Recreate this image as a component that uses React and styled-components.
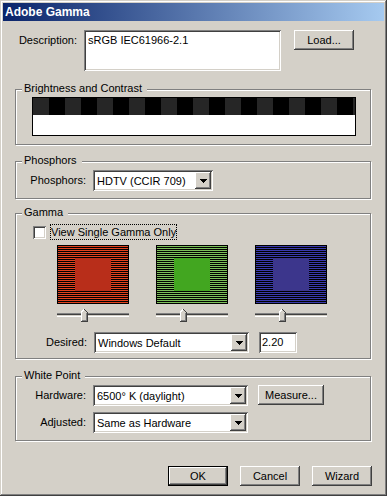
import styled, { createGlobalStyle, css } from "styled-components";

const GlobalStyle = createGlobalStyle`
  body {
    margin: 0;
    background: #d4d0c8;
    font-family: "Liberation Sans", Arial, sans-serif;
    font-size: 11px;
    color: #000;
  }
`;

const sunken = css`
  box-sizing: border-box;
  background: #fff;
  box-shadow: inset 1px 1px #808080, inset -1px -1px #fff,
    inset 2px 2px #404040, inset -2px -2px #d4d0c8;
`;

const raised = css`
  box-sizing: border-box;
  background: #d4d0c8;
  box-shadow: inset -1px -1px #404040, inset 1px 1px #fff,
    inset -2px -2px #808080, inset 2px 2px #d4d0c8;
`;

const Window = styled.div`
  width: 387px;
  height: 496px;
  box-sizing: border-box;
  padding: 3px;
  background: #d4d0c8;
  box-shadow: inset -1px -1px #404040, inset 1px 1px #d4d0c8,
    inset -2px -2px #808080, inset 2px 2px #fff;
  display: flex;
  flex-direction: column;
`;

const TitleBar = styled.div`
  height: 18px;
  display: flex;
  align-items: center;
  padding-left: 2px;
  background: linear-gradient(to right, #0a246a, #a6caf0);
  color: #fff;
  font-weight: bold;
  font-size: 12px;
`;

const Body = styled.div`
  flex: 1;
  display: flex;
  flex-direction: column;
  padding: 9px 13px 0 12px;
`;

const Row = styled.div`
  display: flex;
  align-items: flex-start;
  margin-top: ${(p) => p.$mt || 0}px;
`;

const Label = styled.span`
  width: ${(p) => p.$w}px;
  margin-right: 7px;
  text-align: right;
  line-height: ${(p) => (p.$top ? "13px" : "21px")};
  padding-top: ${(p) => (p.$top ? 4 : 0)}px;
  white-space: nowrap;
`;

const DescBox = styled.div`
  ${sunken};
  width: 197px;
  height: 41px;
  padding: 4px 4px;
  line-height: 13px;
`;

const Button = styled.button`
  ${raised};
  width: ${(p) => p.$w}px;
  height: 20px;
  margin-left: ${(p) => p.$ml || 0}px;
  padding: 0;
  border: ${(p) => (p.$default ? "1px solid #000" : "none")};
  font: inherit;
  color: #000;
`;

const Group = styled.div`
  position: relative;
  margin-top: ${(p) => p.$mt}px;
  border: 1px solid #808080;
  box-shadow: inset 1px 1px #fff, 1px 1px #fff;
  padding: ${(p) => p.$pad};
`;

const Caption = styled.span`
  position: absolute;
  top: -8px;
  left: 6px;
  padding: 0 5px 0 2px;
  background: #d4d0c8;
  line-height: 13px;
`;

const Bar = styled.div`
  width: 324px;
  margin-left: 16px;
  box-sizing: border-box;
  border: 1px solid #000;
`;

const Checker = styled.div`
  height: 17px;
  background: repeating-linear-gradient(
    to right,
    #262626 0 16px,
    #000 16px 32px
  );
`;

const WhiteStrip = styled.div`
  height: 20px;
  background: #fff;
`;

const SelectBox = styled.div`
  ${sunken};
  width: ${(p) => p.$w}px;
  height: 21px;
  padding: 2px;
  display: flex;
  align-items: center;
`;

const SelectText = styled.span`
  flex: 1;
  padding-left: 2px;
  white-space: nowrap;
`;

const DropButton = styled.span`
  ${raised};
  width: 16px;
  height: 17px;
  display: flex;
  align-items: center;
  justify-content: center;
`;

const TextBox = styled.div`
  ${sunken};
  width: ${(p) => p.$w}px;
  height: 21px;
  margin-left: ${(p) => p.$ml || 0}px;
  padding: 0 3px;
  line-height: 21px;
`;

const CheckRow = styled.div`
  display: flex;
  align-items: center;
  height: 16px;
  margin: 10px 0 0 17px;
`;

const CheckBox = styled.span`
  ${sunken};
  width: 13px;
  height: 13px;
  margin-right: 4px;
`;

const FocusLabel = styled.span`
  outline: 1px dotted #000;
  outline-offset: -1px;
  padding: 0 1px;
  line-height: 16px;
`;

const SwatchRow = styled.div`
  display: flex;
  gap: 27px;
  margin: 5px 0 0 41px;
`;

const SwatchColumn = styled.div`
  width: 72px;
  display: flex;
  flex-direction: column;
`;

const Swatch = styled.div`
  height: 59px;
  box-sizing: border-box;
  border: 1px solid #000;
  background: repeating-linear-gradient(
    to bottom,
    ${(p) => p.$line} 0 1px,
    #000 1px 2px
  );
  display: flex;
  align-items: center;
  justify-content: center;
`;

const SwatchCore = styled.div`
  width: 36px;
  height: 33px;
  background: ${(p) => p.$fill};
`;

const Slider = styled.div`
  position: relative;
  height: 14px;
  margin-top: 4px;
`;

const Track = styled.div`
  margin-top: 5px;
  height: 4px;
  box-sizing: border-box;
  border-top: 1px solid #808080;
  border-bottom: 1px solid #fff;
  background: linear-gradient(to bottom, #404040 0 1px, #d4d0c8 1px 2px);
`;

const Thumb = styled.svg`
  position: absolute;
  top: 0;
  display: block;
`;

const ButtonRow = styled.div`
  display: flex;
  justify-content: flex-end;
  gap: 12px;
  margin: 25px -1px 0 0;
`;

const Arrow = () => (
  <svg width="7" height="4" viewBox="0 0 7 4" shapeRendering="crispEdges">
    <path d="M0 0H7V1H6V2H5V3H4V4H3V3H2V2H1V1H0Z" fill="#000" />
  </svg>
);

const Select = ({ width, value }) => (
  <SelectBox $w={width}>
    <SelectText>{value}</SelectText>
    <DropButton>
      <Arrow />
    </DropButton>
  </SelectBox>
);

const GammaSwatch = ({ line, fill, pos }) => (
  <SwatchColumn>
    <Swatch $line={line}>
      <SwatchCore $fill={fill} />
    </Swatch>
    <Slider>
      <Track />
      <Thumb
        width="7"
        height="14"
        viewBox="0 0 7 14"
        shapeRendering="crispEdges"
        style={{ left: pos }}
      >
        <path d="M0 4L3 1L6 4V13H0Z" fill="#d4d0c8" />
        <path d="M0.5 13V4L3 1.5" stroke="#fff" fill="none" />
        <path d="M3.5 1.5L6.5 4.5V13.5H0" stroke="#404040" fill="none" />
        <path d="M5.5 5V12.5H1" stroke="#808080" fill="none" />
      </Thumb>
    </Slider>
  </SwatchColumn>
);

const swatches = [
  { line: "#e2421e", fill: "#b82e1a", pos: 24 },
  { line: "#7cc05a", fill: "#42a620", pos: 24 },
  { line: "#3a3aac", fill: "#3c368c", pos: 24 },
];

export default function App() {
  return (
    <>
      <GlobalStyle />
      <Window>
        <TitleBar>Adobe Gamma</TitleBar>
        <Body>
          <Row>
            <Label $w={62} $top>
              Description:
            </Label>
            <DescBox>sRGB IEC61966-2.1</DescBox>
            <Button $w={60} $ml={13}>
              Load...
            </Button>
          </Row>

          <Group $mt={18} $pad="7px 0 8px 0">
            <Caption>Brightness and Contrast</Caption>
            <Bar>
              <Checker />
              <WhiteStrip />
            </Bar>
          </Group>

          <Group $mt={16} $pad="8px 0 7px 0">
            <Caption>Phosphors</Caption>
            <Row>
              <Label $w={70}>Phosphors:</Label>
              <Select width={120} value="HDTV (CCIR 709)" />
            </Row>
          </Group>

          <Group $mt={14} $pad="0 0 5px 0">
            <Caption>Gamma</Caption>
            <CheckRow>
              <CheckBox />
              <FocusLabel>View Single Gamma Only</FocusLabel>
            </CheckRow>
            <SwatchRow>
              {swatches.map((s) => (
                <GammaSwatch key={s.line} {...s} />
              ))}
            </SwatchRow>
            <Row $mt={10}>
              <Label $w={71}>Desired:</Label>
              <Select width={155} value="Windows Default" />
              <TextBox $w={38} $ml={10}>
                2.20
              </TextBox>
            </Row>
          </Group>

          <Group $mt={17} $pad="8px 0 7px 0">
            <Caption>White Point</Caption>
            <Row>
              <Label $w={70}>Hardware:</Label>
              <Select width={155} value="6500° K (daylight)" />
              <Button $w={66} $ml={10}>
                Measure...
              </Button>
            </Row>
            <Row $mt={6}>
              <Label $w={70}>Adjusted:</Label>
              <Select width={155} value="Same as Hardware" />
            </Row>
          </Group>

          <ButtonRow>
            <Button $w={60} $default>
              OK
            </Button>
            <Button $w={60}>Cancel</Button>
            <Button $w={60}>Wizard</Button>
          </ButtonRow>
        </Body>
      </Window>
    </>
  );
}
